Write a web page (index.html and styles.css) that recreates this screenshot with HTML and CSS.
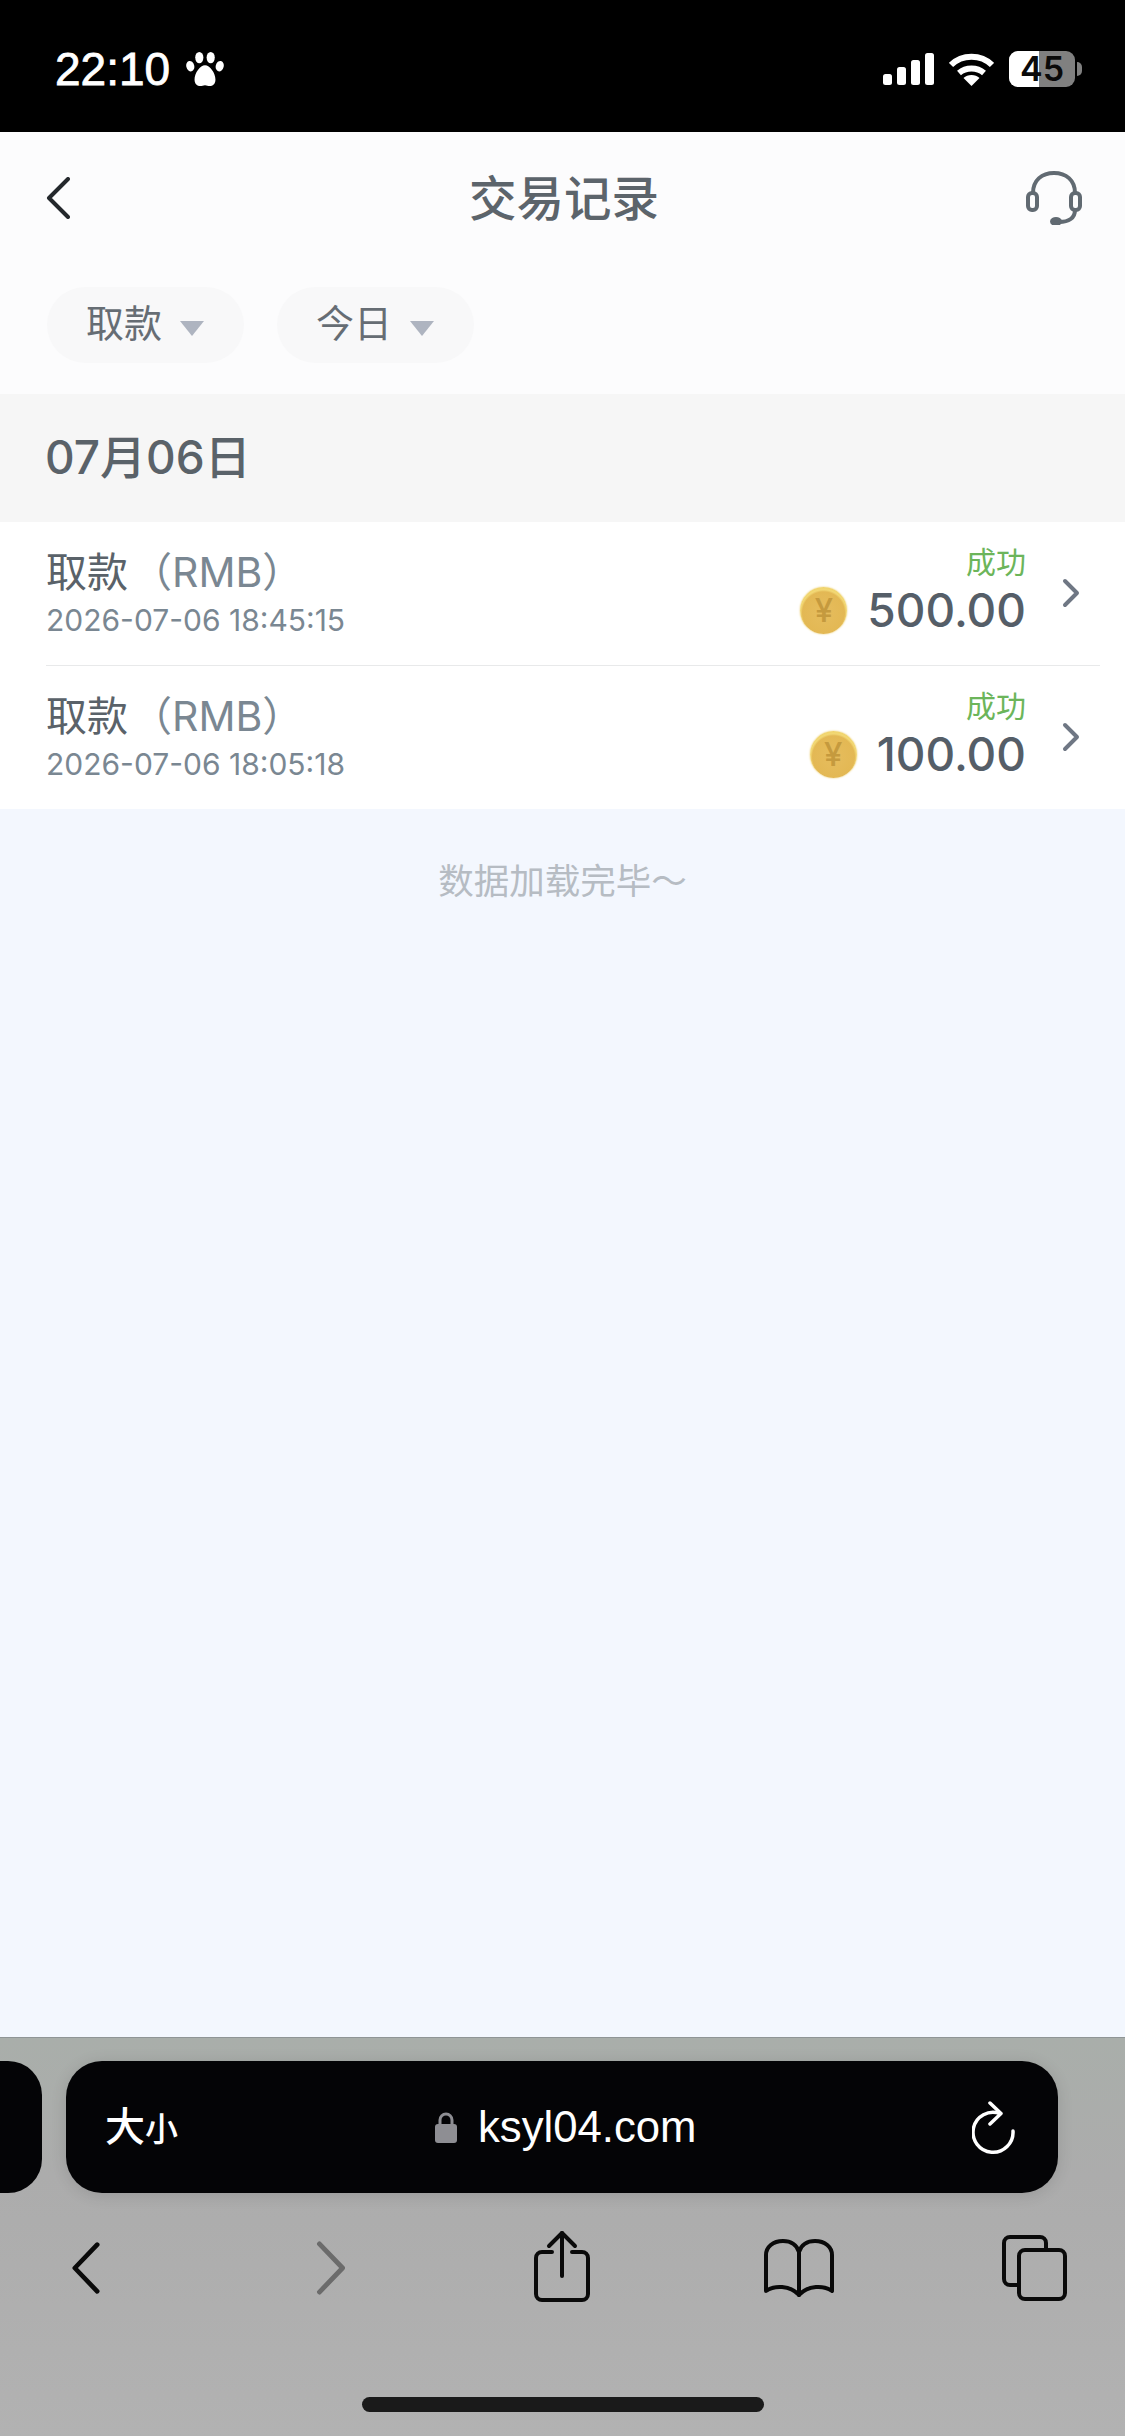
FILE: index.html
```html
<!DOCTYPE html>
<html lang="zh-CN">
<head>
  <meta charset="UTF-8" />
  <meta name="viewport" content="width=device-width, initial-scale=1.0" />
  <title>交易记录</title>
  <link rel="stylesheet" href="styles.css">
</head>
<body>
  <div class="status-bar">
    <div class="status-left">
      <span class="clock">22:10</span>
      <svg class="paw" viewBox="0 0 40 36" fill="#fff">
        <ellipse cx="4.5" cy="15" rx="4.2" ry="5.6" transform="rotate(-14 4.5 15)"/>
        <ellipse cx="14" cy="6" rx="4.3" ry="6"/>
        <ellipse cx="26" cy="6" rx="4.3" ry="6"/>
        <ellipse cx="35.5" cy="15" rx="4.2" ry="5.6" transform="rotate(14 35.5 15)"/>
        <path d="M20 14c5 0 11 8 11 15 0 5-3 7-6 7-2 0-3-1-5-1s-3 1-5 1c-3 0-6-2-6-7 0-7 6-15 11-15z"/>
      </svg>
    </div>
    <div class="status-right">
      <svg class="signal" viewBox="0 0 51 32" fill="#fff">
        <rect x="0" y="21" width="9" height="11" rx="2.5"/>
        <rect x="14" y="14" width="9" height="18" rx="2.5"/>
        <rect x="28" y="7" width="9" height="25" rx="2.5"/>
        <rect x="42" y="0" width="9" height="32" rx="2.5"/>
      </svg>
      <svg class="wifi" viewBox="0 0 45 33" fill="none" stroke="#fff" stroke-width="6">
        <path d="M2 12C13 1 32 1 43 12"/>
        <path d="M10 20c7-6 18-6 25 0"/>
        <path d="M22.500 33l-8-8c4-4 12-4 16 0z" fill="#fff" stroke="none"/>
      </svg>
      <div class="battery">
        <div class="battery-body">
          <span class="battery-fill"></span>
          <span class="battery-num">45</span>
        </div>
        <span class="battery-nub"></span>
      </div>
    </div>
  </div>

  <div class="top-panel">
    <div class="nav-row">
      <svg class="nav-back" viewBox="0 0 24 42" fill="none" stroke="#24282c" stroke-width="4" stroke-linecap="round" stroke-linejoin="round">
        <path d="M22 2L3 21l19 19"/>
      </svg>
      <h1 class="nav-title">交易记录</h1>
      <svg class="nav-service" viewBox="0 0 56 54" fill="none" stroke="#616a72" stroke-width="4" stroke-linecap="round">
        <path d="M7 22C7 9 16 2 28 2s21 7 21 20"/>
        <rect x="2" y="22" width="9" height="17" rx="4"/>
        <rect x="45" y="22" width="9" height="17" rx="4"/>
        <path d="M49 39c0 8-6 12-16 12"/>
        <ellipse cx="30" cy="50.500" rx="4" ry="2.500" fill="#616a72"/>
      </svg>
    </div>
    <div class="filter-row">
      <div class="filter-pill">取款<span class="filter-caret"></span></div>
      <div class="filter-pill">今日<span class="filter-caret"></span></div>
    </div>
  </div>

  <div class="date-band">07月06日</div>

  <div class="records">
    <div class="record">
      <div class="record-info">
        <div class="record-name">取款<span class="record-unit">（RMB）</span></div>
        <div class="record-time">2026-07-06 18:45:15</div>
      </div>
      <div class="record-money">
        <div class="record-state">成功</div>
        <div class="record-amount"><span class="coin">¥</span>500.00</div>
      </div>
      <svg class="record-arrow" viewBox="0 0 18 30" fill="none" stroke="#6f7784" stroke-width="4" stroke-linecap="round" stroke-linejoin="round">
        <path d="M3 3l12 12L3 27"/>
      </svg>
    </div>
    <div class="record">
      <div class="record-info">
        <div class="record-name">取款<span class="record-unit">（RMB）</span></div>
        <div class="record-time">2026-07-06 18:05:18</div>
      </div>
      <div class="record-money">
        <div class="record-state">成功</div>
        <div class="record-amount"><span class="coin">¥</span>100.00</div>
      </div>
      <svg class="record-arrow" viewBox="0 0 18 30" fill="none" stroke="#6f7784" stroke-width="4" stroke-linecap="round" stroke-linejoin="round">
        <path d="M3 3l12 12L3 27"/>
      </svg>
    </div>
  </div>

  <div class="list-end">
    <p class="list-end-text">数据加载完毕～</p>
  </div>

  <div class="browser">
    <div class="address-row">
      <div class="tab-stub"></div>
      <div class="address-bar">
        <div class="text-size">大<small>小</small></div>
        <div class="address">
          <svg class="lock" viewBox="0 0 22 31">
            <path d="M5 14V8a6 6 0 0 1 12 0v6" fill="none" stroke="#8e8e93" stroke-width="3"/>
            <rect x="0" y="12" width="22" height="19" rx="3" fill="#8e8e93"/>
          </svg>
          <span>ksyl04.com</span>
        </div>
        <svg class="reload" viewBox="0 0 44 54" fill="none" stroke="#fff" stroke-width="3.500" stroke-linecap="round" stroke-linejoin="round">
          <path d="M28 12.500A20 20 0 1 0 41 30"/>
          <path d="M18 2l11 10.500L18 23"/>
        </svg>
      </div>
    </div>
    <div class="browser-tools">
      <svg class="tool-back" viewBox="0 0 30 56" fill="none" stroke="#0a0a0a" stroke-width="5" stroke-linecap="round" stroke-linejoin="round">
        <path d="M27 3L3 28l24 25"/>
      </svg>
      <svg class="tool-forward" viewBox="0 0 30 56" fill="none" stroke="#6b6b6b" stroke-width="5" stroke-linecap="round" stroke-linejoin="round">
        <path d="M3 3l24 25L3 53"/>
      </svg>
      <svg class="tool-share" viewBox="0 0 56 72" fill="none" stroke="#0a0a0a" stroke-width="4" stroke-linecap="round" stroke-linejoin="round">
        <path d="M18 22H8a6 6 0 0 0-6 6v36a6 6 0 0 0 6 6h40a6 6 0 0 0 6-6V28a6 6 0 0 0-6-6H38"/>
        <path d="M28 46V3"/>
        <path d="M15 16L28 3l13 13"/>
      </svg>
      <svg class="tool-book" viewBox="0 0 70 58" fill="none" stroke="#0a0a0a" stroke-width="4" stroke-linecap="round" stroke-linejoin="round">
        <path d="M35 13C33 6 27 2 19 2 9 2 2 8 2 16v36c8-6 24-6 33 4 9-10 25-10 33-4V16c0-8-7-14-17-14-8 0-14 4-16 11z"/>
        <path d="M35 13v43"/>
      </svg>
      <svg class="tool-tabs" viewBox="0 0 65 66" fill="none" stroke="#0a0a0a" stroke-width="4" stroke-linejoin="round">
        <path d="M16 50H8a6 6 0 0 1-6-6V8a6 6 0 0 1 6-6h30a6 6 0 0 1 6 6v6"/>
        <rect x="17" y="15" width="46" height="49" rx="6"/>
      </svg>
    </div>
    <div class="home-bar"></div>
  </div>
</body>
</html>
```

FILE: styles.css
```css
* {
  box-sizing: border-box;
}

body {
  margin: 0;
  width: 1125px;
  height: 2436px;
  display: flex;
  flex-direction: column;
  overflow: hidden;
  font-family: "Inter", "Noto Sans CJK SC", sans-serif;
  background-color: #f3f7fe;
  color: #5a6269;
}

.status-bar {
  height: 132px;
  flex: none;
  background-color: #000;
  display: flex;
  justify-content: space-between;
  align-items: flex-start;
  padding: 51px 43px 0 55px;
}

.status-left {
  display: flex;
  align-items: center;
  gap: 16px;
}

.clock {
  color: #fff;
  font-family: "Liberation Sans", sans-serif;
  font-size: 46px;
  line-height: 36px;
  font-weight: 400;
  -webkit-text-stroke: 0.8px #fff;
}

.paw {
  width: 38px;
  height: 36px;
}

.status-right {
  display: flex;
  align-items: center;
  gap: 15px;
}

.signal {
  width: 51px;
  height: 32px;
  margin-left: -2px;
}

.wifi {
  width: 45px;
  height: 33px;
}

.battery {
  display: flex;
  align-items: center;
  gap: 2px;
}

.battery-body {
  width: 66px;
  height: 36px;
  border-radius: 9px;
  background-color: #808080;
  position: relative;
  display: flex;
  align-items: center;
  justify-content: center;
}

.battery-fill {
  position: absolute;
  left: 0;
  top: 0;
  bottom: 0;
  width: 30px;
  border-radius: 9px 0 0 9px;
  background-color: #fff;
}

.battery-num {
  position: relative;
  font-size: 34px;
  line-height: 36px;
  font-weight: 600;
  color: #0a0a0a;
}

.battery-nub {
  width: 5px;
  height: 14px;
  border-radius: 0 6px 6px 0;
  background-color: #808080;
}

.top-panel {
  height: 262px;
  flex: none;
  background-color: #fcfcfd;
  padding: 39px 43px 0 46px;
}

.nav-row {
  display: grid;
  grid-template-columns: 1fr auto 1fr;
  align-items: center;
  height: 53px;
}

.nav-back {
  width: 24px;
  height: 42px;
}

.nav-title {
  margin: 0;
  font-size: 47.500px;
  line-height: 53px;
  font-weight: 500;
  color: #5c646b;
}

.nav-service {
  width: 56px;
  height: 54px;
  justify-self: end;
}

.filter-row {
  display: flex;
  gap: 33px;
  margin: 63px 0 0 1px;
}

.filter-pill {
  height: 76px;
  width: 197px;
  border-radius: 38px;
  background-color: #f8f8f9;
  display: flex;
  align-items: center;
  padding: 0 0 10px 39px;
  font-size: 38px;
  color: #666d74;
}

.filter-caret {
  margin-left: 18px;
  margin-top: 16px;
  border-left: 12px solid transparent;
  border-right: 12px solid transparent;
  border-top: 15px solid #aeb4c0;
}

.date-band {
  height: 128px;
  flex: none;
  background-color: #f6f6f6;
  padding: 0 45px 8px;
  display: flex;
  align-items: center;
  font-size: 46px;
  font-weight: 500;
  color: #5a6269;
}

.records {
  flex: none;
  background-color: #fff;
  padding: 0 25px 0 46px;
}

.record {
  height: 144px;
  display: flex;
  align-items: flex-start;
  padding: 25px 20px 0 0;
  border-bottom: 1.500px solid #e8e9ea;
}

.record:last-child {
  border-bottom: 0;
  height: 143px;
}

.record-info {
  flex: 1;
}

.record-name {
  font-size: 41px;
  line-height: 50px;
  color: #5a6269;
  display: flex;
  align-items: center;
}

.record-unit {
  font-size: 41px;
  color: #7a8792;
  margin-left: 3px;
}

.record-time {
  font-size: 30px;
  line-height: 36px;
  margin-top: 5px;
  color: #7a8792;
}

.record-money {
  display: flex;
  flex-direction: column;
  align-items: flex-end;
}

.record-state {
  font-size: 30px;
  line-height: 32px;
  margin-top: -1px;
  color: #6cb55a;
}

.record-amount {
  display: flex;
  align-items: center;
  gap: 20px;
  margin-top: 4px;
  font-size: 46px;
  line-height: 56px;
  font-weight: 500;
  color: #555e68;
}

.coin {
  width: 47px;
  height: 47px;
  border-radius: 50%;
  background: radial-gradient(circle at 50% 55%, #e6bd5e 0, #e3b854 60%, #f2d875 66%, #e8c048 100%);
  box-shadow: 0 0 2px #e8c65f;
  display: flex;
  align-items: center;
  justify-content: center;
  font-size: 33px;
  line-height: 47px;
  font-weight: 500;
  color: #c59a3e;
}

.record-arrow {
  width: 18px;
  height: 30px;
  margin: 31px 0 0 36px;
  flex: none;
}

.list-end {
  flex: 1;
  min-height: 0;
}

.list-end-text {
  margin: 50px 0 0;
  text-align: center;
  font-size: 35.500px;
  line-height: 46px;
  color: #b6bcc3;
}

.browser {
  height: 399px;
  flex: none;
  border-top: 1.500px solid #8f9596;
  background: linear-gradient(#a9aeaa 0, #acacac 140px, #b2b2b2 100%);
  display: flex;
  flex-direction: column;
}

.address-row {
  display: flex;
  gap: 24px;
  margin-top: 23px;
  height: 132px;
  flex: none;
}

.tab-stub {
  width: 42px;
  background-color: #040406;
  border-radius: 0 34px 34px 0;
}

.address-bar {
  width: 992px;
  background-color: #040406;
  border-radius: 36px;
  box-shadow: 0 2px 16px rgba(0, 0, 0, 0.12);
  display: flex;
  align-items: center;
  justify-content: space-between;
  padding: 0 42px 0 39px;
  color: #fff;
  position: relative;
}

.text-size {
  font-size: 40px;
  line-height: 46px;
  font-weight: 500;
  display: flex;
  align-items: flex-end;
}

.text-size small {
  font-size: 33px;
  line-height: 42px;
}

.address {
  position: absolute;
  left: 369px;
  top: 0;
  bottom: 0;
  display: flex;
  align-items: center;
  gap: 21px;
  font-family: "Liberation Sans", sans-serif;
  font-size: 43.700px;
}

.lock {
  width: 22px;
  height: 31px;
}

.reload {
  width: 44px;
  height: 54px;
  margin-top: 2px;
}

.browser-tools {
  display: flex;
  align-items: flex-start;
  margin-top: 37px;
  height: 72px;
  padding-left: 72px;
}

.tool-back {
  width: 28px;
  height: 54px;
  margin-top: 11px;
}

.tool-forward {
  width: 30px;
  height: 54px;
  margin: 11px 0 0 216px;
}

.tool-share {
  width: 56px;
  height: 72px;
  margin-left: 188px;
}

.tool-book {
  width: 70px;
  height: 58px;
  margin: 9px 0 0 174px;
}

.tool-tabs {
  width: 65px;
  height: 66px;
  margin: 5px 0 0 168px;
}

.home-bar {
  width: 402px;
  height: 15px;
  border-radius: 8px;
  background-color: #1a1a1a;
  margin: 95px auto 0;
}
```
